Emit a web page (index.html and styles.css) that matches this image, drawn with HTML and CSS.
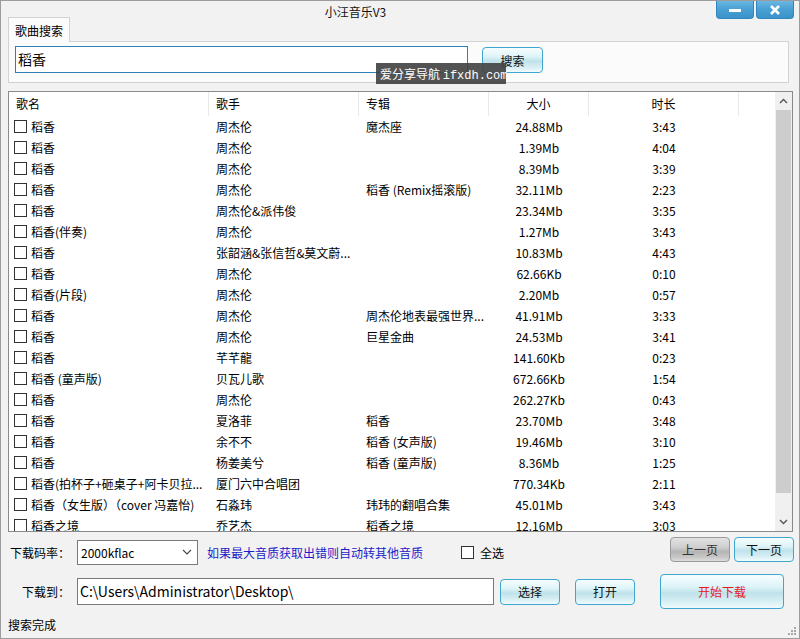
FILE: index.html
```html
<!DOCTYPE html>
<html lang="zh-CN">
<head>
<meta charset="utf-8">
<title>小汪音乐V3</title>
<link rel="stylesheet" href="styles.css">
</head>
<body>
<div class="window">
  <div class="titlebar">
    <div class="title">小汪音乐V3</div>
    <div class="winbtns">
      <div class="winbtn"><svg width="14" height="6" viewBox="0 0 14 6"><rect x="1" y="2" width="12" height="3" fill="#fff"/></svg></div>
      <div class="winbtn"><svg width="12" height="10" viewBox="0 0 12 10"><path d="M2 1 L10 9 M10 1 L2 9" stroke="#fff" stroke-width="2.6"/></svg></div>
    </div>
  </div>

  <div class="tabstrip">
    <div class="tab">歌曲搜索</div>
  </div>
  <div class="tabpanel">
    <div class="searchbox">稻香</div>
    <div class="btn btn-search">搜索</div>
  </div>

  <div class="list">
    <div class="list-main">
      <div class="row head">
        <div class="c c1">歌名</div>
        <div class="c c2">歌手</div>
        <div class="c c3">专辑</div>
        <div class="c c4">大小</div>
        <div class="c c5">时长</div>
        <div class="c c6"></div>
      </div>
      <div class="row"><div class="c c1"><span class="cb"></span>稻香</div><div class="c c2">周杰伦</div><div class="c c3">魔杰座</div><div class="c c4">24.88Mb</div><div class="c c5">3:43</div></div>
      <div class="row"><div class="c c1"><span class="cb"></span>稻香</div><div class="c c2">周杰伦</div><div class="c c3"></div><div class="c c4">1.39Mb</div><div class="c c5">4:04</div></div>
      <div class="row"><div class="c c1"><span class="cb"></span>稻香</div><div class="c c2">周杰伦</div><div class="c c3"></div><div class="c c4">8.39Mb</div><div class="c c5">3:39</div></div>
      <div class="row"><div class="c c1"><span class="cb"></span>稻香</div><div class="c c2">周杰伦</div><div class="c c3">稻香 (Remix摇滚版)</div><div class="c c4">32.11Mb</div><div class="c c5">2:23</div></div>
      <div class="row"><div class="c c1"><span class="cb"></span>稻香</div><div class="c c2">周杰伦&amp;派伟俊</div><div class="c c3"></div><div class="c c4">23.34Mb</div><div class="c c5">3:35</div></div>
      <div class="row"><div class="c c1"><span class="cb"></span>稻香(伴奏)</div><div class="c c2">周杰伦</div><div class="c c3"></div><div class="c c4">1.27Mb</div><div class="c c5">3:43</div></div>
      <div class="row"><div class="c c1"><span class="cb"></span>稻香</div><div class="c c2">张韶涵&amp;张信哲&amp;莫文蔚...</div><div class="c c3"></div><div class="c c4">10.83Mb</div><div class="c c5">4:43</div></div>
      <div class="row"><div class="c c1"><span class="cb"></span>稻香</div><div class="c c2">周杰伦</div><div class="c c3"></div><div class="c c4">62.66Kb</div><div class="c c5">0:10</div></div>
      <div class="row"><div class="c c1"><span class="cb"></span>稻香(片段)</div><div class="c c2">周杰伦</div><div class="c c3"></div><div class="c c4">2.20Mb</div><div class="c c5">0:57</div></div>
      <div class="row"><div class="c c1"><span class="cb"></span>稻香</div><div class="c c2">周杰伦</div><div class="c c3">周杰伦地表最强世界...</div><div class="c c4">41.91Mb</div><div class="c c5">3:33</div></div>
      <div class="row"><div class="c c1"><span class="cb"></span>稻香</div><div class="c c2">周杰伦</div><div class="c c3">巨星金曲</div><div class="c c4">24.53Mb</div><div class="c c5">3:41</div></div>
      <div class="row"><div class="c c1"><span class="cb"></span>稻香</div><div class="c c2">芊芊龍</div><div class="c c3"></div><div class="c c4">141.60Kb</div><div class="c c5">0:23</div></div>
      <div class="row"><div class="c c1"><span class="cb"></span>稻香 (童声版)</div><div class="c c2">贝瓦儿歌</div><div class="c c3"></div><div class="c c4">672.66Kb</div><div class="c c5">1:54</div></div>
      <div class="row"><div class="c c1"><span class="cb"></span>稻香</div><div class="c c2">周杰伦</div><div class="c c3"></div><div class="c c4">262.27Kb</div><div class="c c5">0:43</div></div>
      <div class="row"><div class="c c1"><span class="cb"></span>稻香</div><div class="c c2">夏洛菲</div><div class="c c3">稻香</div><div class="c c4">23.70Mb</div><div class="c c5">3:48</div></div>
      <div class="row"><div class="c c1"><span class="cb"></span>稻香</div><div class="c c2">余不不</div><div class="c c3">稻香 (女声版)</div><div class="c c4">19.46Mb</div><div class="c c5">3:10</div></div>
      <div class="row"><div class="c c1"><span class="cb"></span>稻香</div><div class="c c2">杨姜美兮</div><div class="c c3">稻香 (童声版)</div><div class="c c4">8.36Mb</div><div class="c c5">1:25</div></div>
      <div class="row"><div class="c c1"><span class="cb"></span>稻香(拍杯子+砸桌子+阿卡贝拉...</div><div class="c c2">厦门六中合唱团</div><div class="c c3"></div><div class="c c4">770.34Kb</div><div class="c c5">2:11</div></div>
      <div class="row"><div class="c c1"><span class="cb"></span>稻香（女生版）（cover 冯嘉怡)</div><div class="c c2">石淼玮</div><div class="c c3">玮玮的翻唱合集</div><div class="c c4">45.01Mb</div><div class="c c5">3:43</div></div>
      <div class="row"><div class="c c1"><span class="cb"></span>稻香之境</div><div class="c c2">乔艺杰</div><div class="c c3">稻香之境</div><div class="c c4">12.16Mb</div><div class="c c5">3:03</div></div>
    </div>
    <div class="scrollbar">
      <div class="sb-arrow"><svg width="9" height="6" viewBox="0 0 9 6"><path d="M1 5 L4.5 1.5 L8 5" fill="none" stroke="#555" stroke-width="1.4"/></svg></div>
      <div class="sb-track"><div class="sb-thumb"></div></div>
      <div class="sb-arrow"><svg width="9" height="6" viewBox="0 0 9 6"><path d="M1 1 L4.5 4.5 L8 1" fill="none" stroke="#555" stroke-width="1.4"/></svg></div>
    </div>
  </div>

  <div class="ctrl-row row1">
    <div class="label">下载码率：</div>
    <div class="select"><span>2000kflac</span><svg width="10" height="6" viewBox="0 0 10 6"><path d="M1 1 L5 5 L9 1" fill="none" stroke="#444" stroke-width="1.1"/></svg></div>
    <div class="hint">如果最大音质获取出错则自动转其他音质</div>
    <div class="check"><span class="cb"></span>全选</div>
    <div class="pager">
      <div class="btn btn-grey">上一页</div>
      <div class="btn">下一页</div>
    </div>
  </div>

  <div class="ctrl-row row2">
    <div class="label">下载到：</div>
    <div class="pathbox">C:\Users\Administrator\Desktop\</div>
    <div class="btn btn-sm btn-choose">选择</div>
    <div class="btn btn-sm btn-open">打开</div>
    <div class="btn btn-start">开始下载</div>
  </div>

  <div class="statusbar">
    <div class="status">搜索完成</div>
    <svg class="grip" width="10" height="10" viewBox="0 0 10 10"><g fill="#a8a8a8"><rect x="7" y="1" width="2" height="2"/><rect x="4" y="4" width="2" height="2"/><rect x="7" y="4" width="2" height="2"/><rect x="1" y="7" width="2" height="2"/><rect x="4" y="7" width="2" height="2"/><rect x="7" y="7" width="2" height="2"/></g></svg>
  </div>

  <div class="watermark">爱分享导航 <span class="mono">ifxdh.com</span></div>
</div>
</body>
</html>
```

FILE: styles.css
```css
* { box-sizing: border-box; }
html, body { margin: 0; padding: 0; }
body {
  width: 800px;
  height: 639px;
  overflow: hidden;
  font-family: "Noto Sans CJK SC", "Microsoft YaHei", sans-serif;
  font-size: 12px;
  color: #000;
  background: #f2f2f2;
}
.window {
  position: relative;
  width: 800px;
  height: 639px;
  border: 1px solid #9c9c9c;
  background: #f2f2f2;
  display: flex;
  flex-direction: column;
}

/* title bar */
.titlebar {
  height: 16px;
  display: flex;
  align-items: flex-start;
  flex-shrink: 0;
}
.title {
  flex: 1;
  text-align: center;
  line-height: 22px;
  padding-right: 6px;
  font-size: 12px;
  color: #111;
}
.winbtns {
  display: flex;
  gap: 2px;
  margin-right: 5px;
}
.winbtn {
  width: 38px;
  height: 18px;
  border: 1px solid #3286bd;
  border-top: none;
  border-radius: 0 0 4px 4px;
  background: linear-gradient(#6bb8e2, #4aa1d4 45%, #3a93c9);
  display: flex;
  align-items: center;
  justify-content: center;
}

/* tab */
.tabstrip {
  height: 25px;
  padding-left: 7px;
  display: flex;
  flex-shrink: 0;
}
.tab {
  position: relative;
  z-index: 1;
  width: 62px;
  height: 25px;
  border: 1px solid #d2d2d2;
  border-bottom: none;
  background: #fbfbfb;
  padding-left: 6px;
  line-height: 25px;
}
.tabpanel {
  margin: -1px 10px 0 7px;
  height: 42px;
  border: 1px solid #d2d2d2;
  background: #fbfbfb;
  padding: 4px 0 0 6px;
  display: flex;
  align-items: flex-start;
  flex-shrink: 0;
}
.searchbox {
  width: 453px;
  height: 27px;
  border: 1px solid #2a82b8;
  background: #fff;
  font-size: 14px;
  line-height: 25px;
  padding-left: 2px;
}
.btn {
  width: 60px;
  height: 25px;
  border: 1px solid #3ea6cf;
  border-radius: 4px;
  background: linear-gradient(#f7fdfe 0%, #def4f8 35%, #bfe2ea 55%, #d6eff4 80%, #f2fbfd 100%);
  display: flex;
  align-items: center;
  justify-content: center;
  font-size: 12px;
  color: #111;
}
.btn-search {
  width: 61px;
  height: 26px;
  margin: 1px 0 0 14px;
}

/* list */
.list {
  margin: 8px 6px 0 7px;
  height: 441px;
  border: 1px solid #8a8a8a;
  background: #fff;
  display: flex;
  flex-shrink: 0;
  overflow: hidden;
}
.list-main {
  flex: 1;
  overflow: hidden;
}
.row {
  display: flex;
  height: 21px;
  line-height: 21px;
  white-space: nowrap;
}
.row.head {
  height: 24px;
  line-height: 24px;
}
.c { overflow: hidden; flex-shrink: 0; }
.c1 { width: 200px; padding-left: 5px; display: flex; align-items: center; }
.c2 { width: 150px; padding-left: 7px; }
.c3 { width: 130px; padding-left: 7px; }
.c4 { width: 100px; text-align: center; }
.c5 { width: 150px; text-align: center; }
.c6 { flex: 1; }
.head .c { border-right: 1px solid #e9e9e9; }
.head .c1 { padding-left: 7px; }
.head .c6 { border-right: none; }

.cb {
  display: inline-block;
  width: 13px;
  height: 13px;
  border: 1px solid #333;
  background: #fff;
  margin-right: 4px;
  flex-shrink: 0;
}

.scrollbar {
  width: 17px;
  background: #f0f0f0;
  display: flex;
  flex-direction: column;
  flex-shrink: 0;
}
.sb-arrow {
  height: 18px;
  display: flex;
  align-items: center;
  justify-content: center;
}
.sb-track {
  flex: 1;
  padding: 0 1px 0 1px;
  display: flex;
  flex-direction: column;
}
.sb-thumb {
  height: 383px;
  background: #cdcdcd;
}

/* controls */
.ctrl-row {
  display: flex;
  align-items: center;
  flex-shrink: 0;
}
.label {
  width: 76px;
  padding-right: 7px;
  text-align: right;
  font-size: 12px;
}
.row1 {
  margin-top: 5px;
  height: 30px;
}
.select {
  width: 121px;
  height: 25px;
  border: 1px solid #7a7a7a;
  background: #fff;
  display: flex;
  align-items: center;
  justify-content: space-between;
  padding: 0 5px 0 3px;
  font-size: 12px;
}
.hint {
  width: 254px;
  margin-left: 9px;
  color: #1c1cc8;
}
.check {
  display: flex;
  align-items: center;
  gap: 2px;
}
.pager {
  margin-left: auto;
  margin-right: 5px;
  align-self: flex-start;
  display: flex;
  gap: 4px;
}
.btn-grey {
  border-color: #9a9a9a;
  background: linear-gradient(#e2e2e2 0%, #cfcfcf 40%, #b4b4b4 60%, #c9c9c9 85%, #dcdcdc 100%);
  color: #333;
}
.row2 {
  margin-top: 7px;
  height: 35px;
}
.pathbox {
  width: 417px;
  height: 27px;
  border: 1px solid #7a7a7a;
  background: #fff;
  font-size: 14px;
  line-height: 25px;
  padding-left: 2px;
}
.btn-sm { height: 26px; }
.btn-choose { margin-left: 6px; }
.btn-open { margin-left: 15px; }
.btn-start {
  width: 124px;
  height: 35px;
  margin-left: 25px;
  color: #e41a1a;
}

.statusbar {
  margin-top: 9px;
  flex: 1;
  display: flex;
  justify-content: space-between;
  padding-left: 7px;
}
.status {
  line-height: 14px;
  font-size: 12px;
}
.grip {
  align-self: flex-end;
  margin: 0 2px 2px 0;
}

.watermark {
  position: absolute;
  left: 375px;
  top: 62px;
  width: 130px;
  height: 21px;
  background: rgba(64, 64, 64, 0.9);
  color: #fff;
  font-size: 12px;
  line-height: 21px;
  padding-left: 4px;
  white-space: nowrap;
}
.mono {
  font-family: "Liberation Mono", "DejaVu Sans Mono", monospace;
  font-size: 12px;
}
```
